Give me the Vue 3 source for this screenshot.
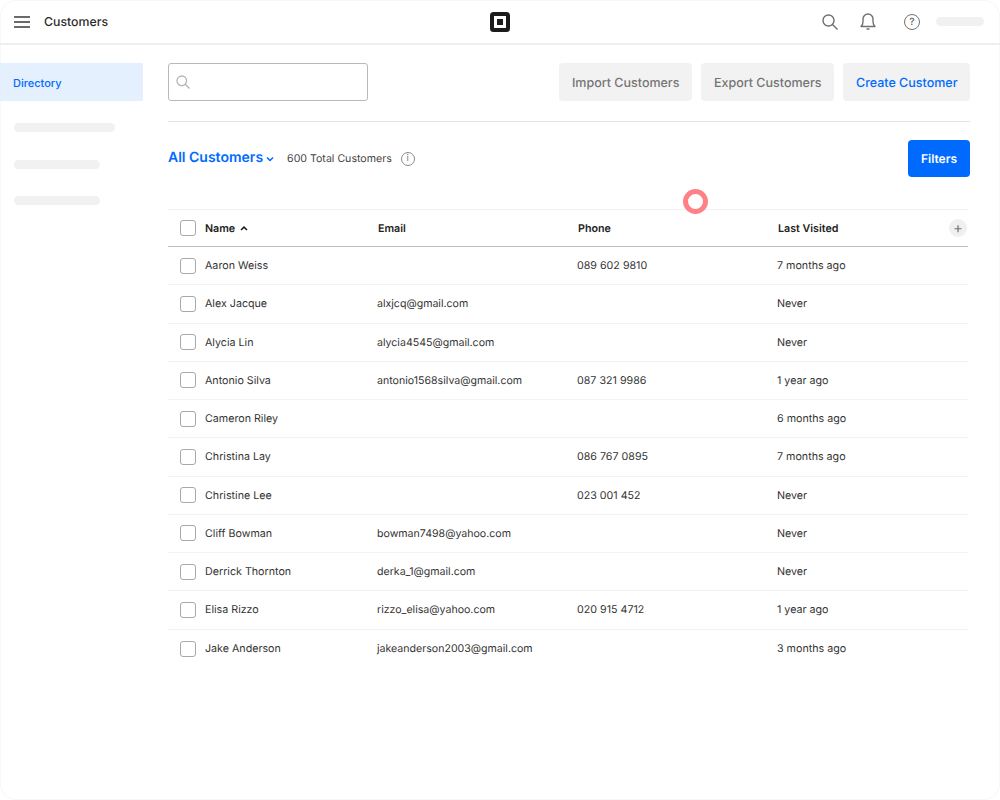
<script setup>
const customers = [
  { name: 'Aaron Weiss', email: '', phone: '089 602 9810', last: '7 months ago' },
  { name: 'Alex Jacque', email: 'alxjcq@gmail.com', phone: '', last: 'Never' },
  { name: 'Alycia Lin', email: 'alycia4545@gmail.com', phone: '', last: 'Never' },
  { name: 'Antonio Silva', email: 'antonio1568silva@gmail.com', phone: '087 321 9986', last: '1 year ago' },
  { name: 'Cameron Riley', email: '', phone: '', last: '6 months ago' },
  { name: 'Christina Lay', email: '', phone: '086 767 0895', last: '7 months ago' },
  { name: 'Christine Lee', email: '', phone: '023 001 452', last: 'Never' },
  { name: 'Cliff Bowman', email: 'bowman7498@yahoo.com', phone: '', last: 'Never' },
  { name: 'Derrick Thornton', email: 'derka_1@gmail.com', phone: '', last: 'Never' },
  { name: 'Elisa Rizzo', email: 'rizzo_elisa@yahoo.com', phone: '020 915 4712', last: '1 year ago' },
  { name: 'Jake Anderson', email: 'jakeanderson2003@gmail.com', phone: '', last: '3 months ago' },
]
</script>

<template>
  <div class="page">
    <header class="topbar">
      <div class="top-left">
        <svg class="burger" width="16" height="12" viewBox="0 0 16 12">
          <path d="M0 1h16M0 6h16M0 11h16" stroke="#3a3a3a" stroke-width="1.5" fill="none" />
        </svg>
        <span class="title">Customers</span>
      </div>
      <svg class="logo" width="20" height="20" viewBox="0 0 20 20">
        <path fill-rule="evenodd" fill="#1c1c1c" d="M3.500 0h13A3.500 3.500 0 0 1 20 3.500v13a3.500 3.500 0 0 1-3.500 3.500h-13A3.500 3.500 0 0 1 0 16.500v-13A3.500 3.500 0 0 1 3.500 0zM4 4v12h12V4z" />
        <rect x="7" y="7" width="6" height="6" fill="#1c1c1c" />
      </svg>
      <div class="top-right">
        <svg class="t-search" width="16" height="16" viewBox="0 0 16 16" fill="none" stroke="#707070" stroke-width="1.400">
          <circle cx="6.500" cy="6.500" r="5.500" />
          <path d="M10.500 10.500l5 5" />
        </svg>
        <svg class="t-bell" width="16" height="17" viewBox="0 0 16 17" fill="none" stroke="#707070" stroke-width="1.400">
          <path d="M1 13.500c1.300-1.100 2-2.400 2-5V6a5 5 0 0 1 10 0v2.500c0 2.600.7 3.900 2 5z" stroke-linejoin="round" />
          <path d="M6.500 16h3" />
        </svg>
        <span class="help">?</span>
        <span class="top-pill"></span>
      </div>
    </header>

    <div class="body">
      <aside class="side">
        <div class="side-active">Directory</div>
        <div class="side-pills">
          <span class="pill p1"></span>
          <span class="pill p2"></span>
          <span class="pill p2"></span>
        </div>
      </aside>

      <main class="main">
        <div class="toolbar">
          <div class="search">
            <svg width="14" height="14" viewBox="0 0 14 14" fill="none" stroke="#b5b5b5" stroke-width="1.300">
              <circle cx="5.800" cy="5.800" r="4.800" />
              <path d="M9.300 9.300l4.200 4.200" />
            </svg>
          </div>
          <div class="actions">
            <button class="btn">Import Customers</button>
            <button class="btn">Export Customers</button>
            <button class="btn blue">Create Customer</button>
          </div>
        </div>

        <div class="summary">
          <div class="summary-left">
            <span class="all">All Customers</span>
            <svg class="chev" width="8" height="6" viewBox="0 0 8 6" fill="none" stroke="#006aff" stroke-width="1.500">
              <path d="M1 1.500l3 3 3-3" />
            </svg>
            <span class="total">600 Total Customers</span>
            <span class="info">i</span>
          </div>
          <button class="filters">Filters</button>
        </div>

        <div class="table">
          <div class="row head">
            <span class="check"></span>
            <span class="name-head">Name
              <svg width="8" height="5" viewBox="0 0 8 5" fill="none" stroke="#1f1f1f" stroke-width="1.600">
                <path d="M1 4l3-2.800L7 4" />
              </svg>
            </span>
            <span class="shift">Email</span>
            <span class="shift">Phone</span>
            <span class="shift">Last Visited</span>
            <span class="plus">+</span>
          </div>
          <div v-for="c in customers" :key="c.name" class="row">
            <span class="check"></span>
            <span class="name">{{ c.name }}</span>
            <span class="email">{{ c.email }}</span>
            <span>{{ c.phone }}</span>
            <span>{{ c.last }}</span>
            <span></span>
          </div>
        </div>
      </main>
    </div>

    <span class="marker"></span>
  </div>
</template>

<style>
html, body { margin: 0; background: #fff; }
</style>

<style scoped>
.page {
  position: relative;
  width: 1000px;
  height: 800px;
  box-sizing: border-box;
  overflow: hidden;
  background: #fff;
  border-radius: 16px;
  box-shadow: inset 0 0 0 1px #f8f8f8;
  font-family: Inter, "Liberation Sans", sans-serif;
  color: #2c2c2c;
  font-size: 10.700px;
  text-rendering: geometricPrecision;
}
.topbar {
  height: 45px;
  box-sizing: border-box;
  border-bottom: 2px solid #efefef;
  display: grid;
  grid-template-columns: 1fr auto 1fr;
  align-items: center;
  padding: 0 16px;
}
.top-left { display: flex; align-items: center; gap: 14px; margin-left: -2px; }
.burger { display: block; }
.title { font-size: 12.300px; font-weight: 500; color: #2a2a2a; }
.logo { display: block; }
.top-right { display: flex; align-items: center; justify-content: flex-end; }
.t-search { display: block; margin-right: 22px; }
.t-bell { display: block; margin-right: 28px; }
.help {
  width: 16px;
  height: 16px;
  box-sizing: border-box;
  border: 1.400px solid #707070;
  border-radius: 50%;
  display: flex;
  align-items: center;
  justify-content: center;
  font-size: 10px;
  font-weight: 600;
  color: #707070;
  margin-right: 16px;
}
.top-pill { width: 48px; height: 9px; background: #f1f1f1; border-radius: 5px; }
.body { display: flex; }
.side { width: 143px; flex: none; padding-top: 18px; }
.side-active {
  height: 38px;
  box-sizing: border-box;
  background: #e4f0fe;
  color: #006aff;
  font-size: 11px;
  font-weight: 500;
  display: flex;
  align-items: center;
  padding: 1px 0 0 13px;
}
.side-pills { display: flex; flex-direction: column; gap: 27.500px; padding: 22px 0 0 14px; }
.pill { height: 9px; background: #f1f1f1; border-radius: 5px; }
.p1 { width: 101px; }
.p2 { width: 86px; }
.main { width: 802px; margin-left: 25px; padding-top: 18px; }
.toolbar {
  display: flex;
  justify-content: space-between;
  padding-bottom: 20px;
  border-bottom: 1px solid #e4e4e4;
}
.search {
  width: 200px;
  height: 38px;
  box-sizing: border-box;
  border: 1px solid #b8b8b8;
  border-radius: 3px;
  display: flex;
  align-items: center;
  padding-left: 7px;
}
.actions { display: flex; gap: 9.500px; }
.btn {
  height: 38px;
  padding: 2px 12.500px 0;
  border: 0;
  border-radius: 4px;
  background: #f2f2f2;
  color: #757575;
  font: 500 12.500px Inter, "Liberation Sans", sans-serif;
  text-rendering: geometricPrecision;
}
.btn.blue { color: #006aff; }
.summary {
  display: flex;
  justify-content: space-between;
  align-items: center;
  padding-top: 18px;
}
.summary-left { display: flex; align-items: center; }
.all { font-size: 14px; font-weight: 600; color: #006aff; position: relative; top: -1px; }
.chev { margin: 0 0 0 3px; }
.total { margin-left: 13px; color: #444; font-size: 10.600px; }
.info {
  width: 14px;
  height: 14px;
  box-sizing: border-box;
  margin-left: 9px;
  border: 1.300px solid #8a8a8a;
  border-radius: 50%;
  display: flex;
  align-items: center;
  justify-content: center;
  font-size: 9.500px;
  color: #777;
}
.filters {
  width: 62px;
  height: 37px;
  border: 0;
  border-radius: 4px;
  background: #006aff;
  color: #fff;
  font: 600 12px Inter, "Liberation Sans", sans-serif;
  text-rendering: geometricPrecision;
}
.table { margin-top: 32px; width: 800px; border-top: 1px solid #f2f2f2; }
.row {
  display: grid;
  grid-template-columns: 25px 172px 200px 200px 1fr 30px;
  align-items: center;
  height: 38.250px;
  box-sizing: border-box;
  padding-left: 12px;
  border-bottom: 1px solid #f3f3f3;
  color: #333;
}
.row:last-child { border-bottom: 0; }
.email { font-size: 10.600px; }
.head {
  height: 37px;
  border-bottom: 1px solid #bdbdbd;
  font-weight: 600;
  color: #222;
}
.check {
  width: 16px;
  height: 16px;
  box-sizing: border-box;
  border: 1.300px solid #a8a8a8;
  border-radius: 3px;
}
.name-head { display: flex; align-items: center; gap: 5px; }
.shift { margin-left: 1px; }
.plus {
  width: 18px;
  height: 18px;
  border-radius: 50%;
  background: #f0f0f0;
  color: #7a7a7a;
  font-size: 15px;
  font-weight: 400;
  line-height: 17px;
  text-align: center;
  justify-self: end;
  margin-right: 1px;
}
.marker {
  position: absolute;
  left: 683px;
  top: 189px;
  width: 15px;
  height: 15px;
  border: 5px solid #ff8085;
  border-radius: 50%;
}
</style>
